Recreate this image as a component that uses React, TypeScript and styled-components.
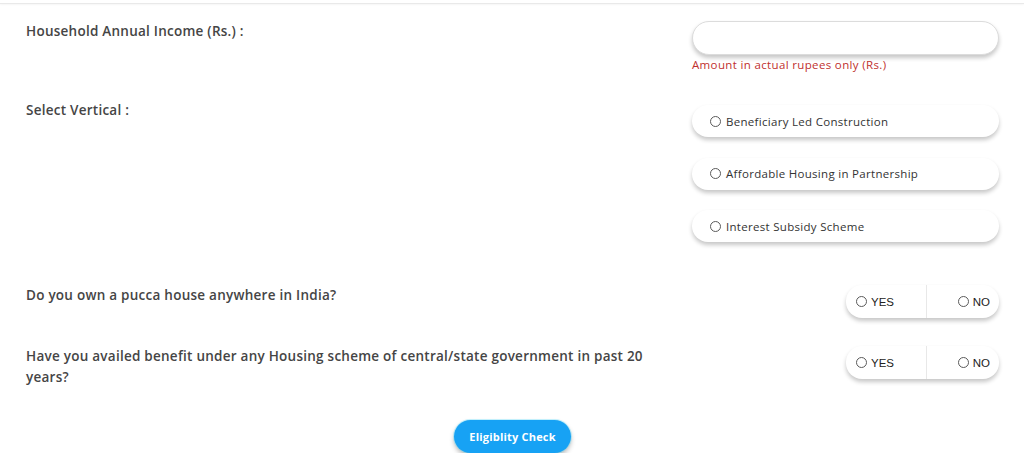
import React from 'react';
import styled, { createGlobalStyle } from 'styled-components';

const GlobalStyle = createGlobalStyle`
  html, body {
    margin: 0;
    padding: 0;
    background: #ffffff;
  }
  body {
    font-family: 'Open Sans', 'Noto Sans', sans-serif;
    color: #444444;
  }
`;

const TopRule = styled.div`
  height: 3px;
  border-bottom: 1px solid #e9e9e9;
  box-shadow: 0 1px 2px rgba(0, 0, 0, 0.04);
`;

const Form = styled.form`
  display: flex;
  flex-direction: column;
  padding: 17px 25px 0 26px;
`;

const Row = styled.div<{ gap?: number }>`
  display: grid;
  grid-template-columns: 1fr 307px;
  align-items: start;
  margin-top: ${(props) => props.gap || 0}px;
`;

const Label = styled.label`
  display: block;
  max-width: 630px;
  font-size: 13.5px;
  font-weight: 600;
  letter-spacing: 0.25px;
  line-height: 21px;
  color: #454545;
`;

const Field = styled.div`
  display: flex;
  flex-direction: column;
`;

const TextInput = styled.input`
  box-sizing: border-box;
  width: 100%;
  height: 34px;
  padding: 0 16px;
  border: 1px solid #dcdcdc;
  border-radius: 17px;
  background: #ffffff;
  box-shadow: 0 3px 4px rgba(0, 0, 0, 0.22);
  font-family: inherit;
  font-size: 12px;
  outline: none;
`;

const Hint = styled.span`
  margin-top: 3px;
  font-size: 11.5px;
  letter-spacing: 0.35px;
  line-height: 14px;
  color: #c0302e;
`;

const OptionList = styled.div`
  display: flex;
  flex-direction: column;
  gap: 20.5px;
  padding-top: 5px;
`;

const Option = styled.label`
  display: flex;
  align-items: center;
  gap: 5px;
  height: 32px;
  padding-left: 18px;
  border-radius: 16px;
  background: #ffffff;
  box-shadow: 0 3px 4px rgba(0, 0, 0, 0.22);
  font-size: 11.5px;
  letter-spacing: 0.3px;
  color: #333333;
  cursor: pointer;
`;

const Radio = styled.span`
  box-sizing: border-box;
  flex: none;
  width: 11px;
  height: 11px;
  border: 1px solid #5a5a5a;
  border-radius: 50%;
`;

const ToggleWrap = styled.div`
  display: flex;
  justify-content: flex-end;
`;

const Toggle = styled.div`
  display: grid;
  grid-template-columns: 80px 73px;
  width: 153px;
  height: 33px;
  border-radius: 16px;
  background: #ffffff;
  box-shadow: 0 3px 4px rgba(0, 0, 0, 0.22);
`;

const ToggleSide = styled.label<{ right?: boolean }>`
  display: flex;
  align-items: center;
  justify-content: ${(props) => (props.right ? 'flex-end' : 'flex-start')};
  gap: 4px;
  padding: ${(props) => (props.right ? '0 9px 0 0' : '0 0 0 10px')};
  border-left: ${(props) => (props.right ? '1px solid #e8e8e8' : 'none')};
  font-family: 'Liberation Sans', Arial, sans-serif;
  font-size: 11.5px;
  color: #222222;
  cursor: pointer;
`;

const Actions = styled.div`
  display: flex;
  justify-content: center;
  margin-top: 32px;
`;

const CheckButton = styled.button`
  height: 33px;
  padding: 0 15px;
  border: none;
  border-radius: 17px;
  background: #17a2f4;
  box-shadow: 0 0 0 1px rgba(90, 220, 255, 0.35), 0 3px 5px rgba(0, 0, 0, 0.28);
  font-family: 'Open Sans', sans-serif;
  font-size: 11px;
  font-weight: 700;
  letter-spacing: 0.2px;
  color: #ffffff;
  cursor: pointer;
`;

const verticals = [
  'Beneficiary Led Construction',
  'Affordable Housing in Partnership',
  'Interest Subsidy Scheme',
];

const YesNo: React.FC = () => (
  <ToggleWrap>
    <Toggle>
      <ToggleSide>
        <Radio />
        YES
      </ToggleSide>
      <ToggleSide right>
        <Radio />
        NO
      </ToggleSide>
    </Toggle>
  </ToggleWrap>
);

export default function App() {
  return (
    <>
      <GlobalStyle />
      <TopRule />
      <Form onSubmit={(e) => e.preventDefault()}>
        <Row>
          <Label>Household Annual Income (Rs.) :</Label>
          <Field>
            <TextInput type="text" />
            <Hint>Amount in actual rupees only (Rs.)</Hint>
          </Field>
        </Row>
        <Row gap={28}>
          <Label>Select Vertical :</Label>
          <OptionList>
            {verticals.map((v) => (
              <Option key={v}>
                <Radio />
                {v}
              </Option>
            ))}
          </OptionList>
        </Row>
        <Row gap={43}>
          <Label>Do you own a pucca house anywhere in India?</Label>
          <YesNo />
        </Row>
        <Row gap={28}>
          <Label>
            Have you availed benefit under any Housing scheme of central/state
            government in past 20 years?
          </Label>
          <YesNo />
        </Row>
        <Actions>
          <CheckButton type="submit">Eligiblity Check</CheckButton>
        </Actions>
      </Form>
    </>
  );
}
